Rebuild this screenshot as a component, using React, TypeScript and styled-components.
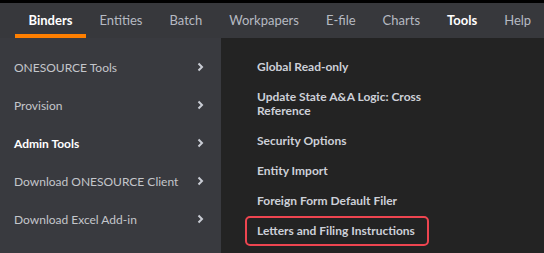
import React from "react";
import styled, { createGlobalStyle } from "styled-components";

const GlobalStyle = createGlobalStyle`
  html, body {
    margin: 0;
    padding: 0;
    background: #000;
  }
  body {
    font-family: Lato, "Noto Sans", sans-serif;
  }
`;

const navItems = ["Binders", "Entities", "Batch", "Workpapers", "E-file", "Charts", "Tools", "Help"];

const leftItems = [
  "ONESOURCE Tools",
  "Provision",
  "Admin Tools",
  "Download ONESOURCE Client",
  "Download Excel Add-in",
];

const toolItems = [
  "Global Read-only",
  "Update State A&A Logic: Cross Reference",
  "Security Options",
  "Entity Import",
  "Foreign Form Default Filer",
  "Letters and Filing Instructions",
];

const Chevron = () => (
  <svg width="7" height="10" viewBox="0 0 7 10">
    <path d="M1.5 1.5 L5 5 L1.5 8.5" fill="none" stroke="#c9ccd4" strokeWidth="2" />
  </svg>
);

const App = () => {
  return (
    <>
      <GlobalStyle />
      <Page>
        <NavBar>
          {navItems.map((item) => (
            <NavItem key={item} active={item === "Binders"} bold={item === "Binders" || item === "Tools"}>
              {item}
            </NavItem>
          ))}
        </NavBar>
        <Body>
          <Sidebar>
            {leftItems.map((item) => (
              <SideRow key={item} active={item === "Admin Tools"}>
                <span>{item}</span>
                <Chevron />
              </SideRow>
            ))}
          </Sidebar>
          <Submenu>
            {toolItems.map((item) => (
              <ToolItem key={item} highlighted={item === "Letters and Filing Instructions"}>
                {item}
              </ToolItem>
            ))}
          </Submenu>
        </Body>
      </Page>
    </>
  );
};

export default App;

const Page = styled.div`
  width: 544px;
  height: 253px;
  padding-top: 3px;
  box-sizing: border-box;
  display: flex;
  flex-direction: column;
  overflow: hidden;
`;

const NavBar = styled.div`
  height: 35px;
  display: flex;
  padding-left: 15px;
  background: #37383c;
`;

const NavItem = styled.div<{ active: boolean; bold: boolean }>`
  padding: 2px 13.5px 0;
  display: flex;
  align-items: center;
  box-sizing: border-box;
  white-space: nowrap;
  font-size: 13px;
  font-weight: ${(p) => (p.bold ? 700 : 400)};
  color: ${(p) => (p.bold ? "#ffffff" : "#b6bac2")};
  border-bottom: 4px solid ${(p) => (p.active ? "#ff7f00" : "transparent")};
`;

const Body = styled.div`
  flex: 1;
  display: flex;
`;

const Sidebar = styled.div`
  width: 221px;
  background: #393a3f;
  padding-top: 10px;
  box-sizing: border-box;
`;

const SideRow = styled.div<{ active: boolean }>`
  height: 38px;
  display: flex;
  align-items: center;
  justify-content: space-between;
  padding: 0 17px 0 14px;
  font-size: 12px;
  font-weight: ${(p) => (p.active ? 700 : 400)};
  color: ${(p) => (p.active ? "#ffffff" : "#c4c6cb")};
`;

const Submenu = styled.div`
  flex: 1;
  background: #232323;
  padding: 14px 0 0 24px;
  display: flex;
  flex-direction: column;
  align-items: flex-start;
`;

const ToolItem = styled.div<{ highlighted: boolean }>`
  max-width: 190px;
  padding: 6px 12px 6px 10px;
  border: 2px solid ${(p) => (p.highlighted ? "#ee4550" : "transparent")};
  border-radius: 5px;
  font-size: 12px;
  line-height: 14px;
  font-weight: 700;
  color: #cdd0d8;
`;
